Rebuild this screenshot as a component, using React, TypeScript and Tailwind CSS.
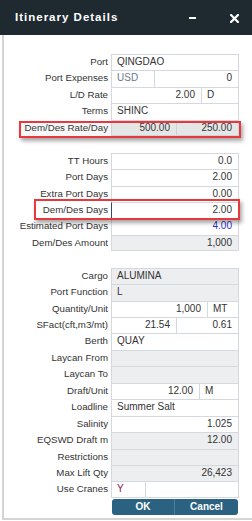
import React from "react";

type Cell = { text?: string; align?: "l" | "r"; w?: number; color?: string };
type Row = {
  label: string;
  cells: Cell[];
  gray?: boolean;
  last?: boolean;
  focus?: boolean;
};

const S1: Row[] = [
  { label: "Port", cells: [{ text: "QINGDAO" }] },
  { label: "Port Expenses", cells: [{ text: "USD", w: 42, color: "text-[#6b7b8c]" }, { text: "0", align: "r" }] },
  { label: "L/D Rate", cells: [{ text: "2.00", align: "r", w: 89 }, { text: "D" }] },
  { label: "Terms", cells: [{ text: "SHINC" }] },
  { label: "Dem/Des Rate/Day", gray: true, last: true, cells: [{ text: "500.00", align: "r", w: 64 }, { text: "250.00", align: "r" }] },
];
const S2: Row[] = [
  { label: "TT Hours", cells: [{ text: "0.0", align: "r" }] },
  { label: "Port Days", cells: [{ text: "2.00", align: "r" }] },
  { label: "Extra Port Days", cells: [{ text: "0.00", align: "r" }] },
  { label: "Dem/Des Days", focus: true, cells: [{ text: "2.00", align: "r" }] },
  { label: "Estimated Port Days", cells: [{ text: "4.00", align: "r", color: "text-[#2f2fd0]" }] },
  { label: "Dem/Des Amount", gray: true, last: true, cells: [{ text: "1,000", align: "r" }] },
];
const S3: Row[] = [
  { label: "Cargo", gray: true, cells: [{ text: "ALUMINA" }] },
  { label: "Port Function", gray: true, cells: [{ text: "L", color: "text-[#4a2a3a]" }] },
  { label: "Quantity/Unit", cells: [{ text: "1,000", align: "r", w: 95 }, { text: "MT" }] },
  { label: "SFact(cft,m3/mt)", cells: [{ text: "21.54", align: "r", w: 64 }, { text: "0.61", align: "r" }] },
  { label: "Berth", cells: [{ text: "QUAY" }] },
  { label: "Laycan From", gray: true, cells: [{}] },
  { label: "Laycan To", gray: true, cells: [{}] },
  { label: "Draft/Unit", cells: [{ text: "12.00", align: "r", w: 87 }, { text: "M" }] },
  { label: "Loadline", cells: [{ text: "Summer Salt" }] },
  { label: "Salinity", cells: [{ text: "1.025", align: "r" }] },
  { label: "EQSWD Draft m", gray: true, cells: [{ text: "12.00", align: "r" }] },
  { label: "Restrictions", gray: true, cells: [{}] },
  { label: "Max Lift Qty", gray: true, cells: [{ text: "26,423", align: "r" }] },
  { label: "Use Cranes", last: true, cells: [{ text: "Y", w: 33, color: "text-[#8a1b3f]" }, {}] },
];

function FormRow({ r }: { r: Row }) {
  return (
    <div className="flex h-[16.44px]">
      <div className="w-[107px] pr-[3px] text-right leading-[16px] whitespace-nowrap text-[#333]">{r.label}</div>
      <div
        className={`flex w-[128px] border-t border-r border-[#d3d9de] ${r.last ? "border-b" : ""} ${
          r.focus ? "border-l border-l-[#2c4f63]" : "border-l"
        } ${r.gray ? "bg-[#eceeef]" : "bg-white"}`}
      >
        {r.cells.map((c, i) => (
          <div
            key={i}
            className={`${c.w ? "shrink-0" : "flex-1"} ${i > 0 ? "border-l border-[#d3d9de]" : ""} ${
              c.align === "r" ? "text-right pr-[6px]" : "text-left pl-[5px]"
            } ${c.color ?? "text-[#333]"} text-[10px] leading-[14px] whitespace-nowrap overflow-hidden`}
            style={c.w ? { width: c.w } : undefined}
          >
            {c.text}
          </div>
        ))}
      </div>
    </div>
  );
}

function Spacer() {
  return <div className="h-[16.44px]" />;
}

export default function App() {
  return (
    <div className="relative w-[252px] h-[521px] bg-white overflow-hidden" style={{ fontFamily: '"Liberation Sans", Arial, sans-serif' }}>
      <div className="h-[35px] bg-[#1f2a30] flex items-center pl-[15px] pr-[13px]">
        <div className="text-white font-bold text-[11.5px] tracking-[1px] flex-1">Itinerary Details</div>
        <div className="w-[7px] h-[2px] bg-white mr-[34px] mt-[1px]" />
        <svg width="9" height="9" viewBox="0 0 9 9" className="mt-[1px]">
          <path d="M1 1 L8 8 M8 1 L1 8" stroke="white" strokeWidth="2.2" strokeLinecap="square" />
        </svg>
      </div>
      <div className="ml-[2px] h-[485px] border-l-2 border-b-2 border-[#d4d4d4] pt-[19px] text-[9.7px]">
        {S1.map((r) => (
          <FormRow key={r.label} r={r} />
        ))}
        <Spacer />
        {S2.map((r) => (
          <FormRow key={r.label} r={r} />
        ))}
        <Spacer />
        {S3.map((r) => (
          <FormRow key={r.label} r={r} />
        ))}
        <div className="flex ml-[108px] mt-px w-[126px] h-[16px] rounded-[3px] bg-[#2c6281] text-white font-bold text-[10px]">
          <div className="w-[63px] flex items-center justify-center border-r border-[#4d7d98]">OK</div>
          <div className="flex-1 flex items-center justify-center">Cancel</div>
        </div>
      </div>
      <div className="absolute left-[19px] top-[121px] w-[222px] h-[17px] border-2 border-[#e8383d] bg-[rgba(120,120,120,0.06)] shadow-[2px_3px_4px_rgba(0,0,0,0.35)]" />
      <div className="absolute left-[34px] top-[199px] w-[206px] h-[21px] border-2 border-[#e8383d] shadow-[2px_3px_4px_rgba(0,0,0,0.35)]" />
    </div>
  );
}
